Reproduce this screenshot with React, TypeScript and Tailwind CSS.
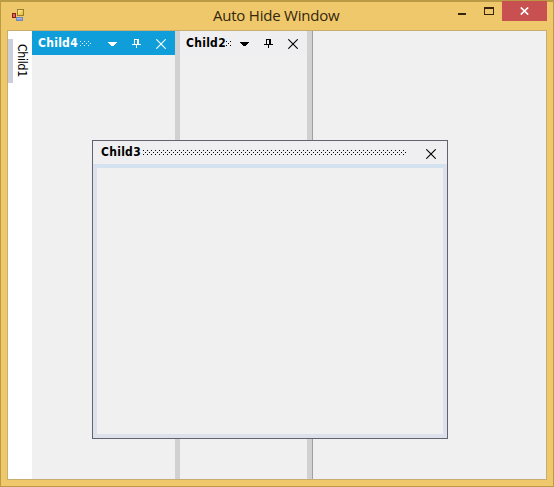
import React from 'react';

const CAPTION_FONT = "font-['DejaVu_Sans_Condensed','DejaVu_Sans',sans-serif]";

function Grip({ id, width }: { id: string; width: number }) {
  return (
    <svg width={width} height="5" className="block shrink-0" shapeRendering="crispEdges">
      <defs>
        <pattern id={id} width="4" height="4" patternUnits="userSpaceOnUse">
          <rect width="1" height="1" fill="currentColor" />
          <rect x="2" y="2" width="1" height="1" fill="currentColor" />
        </pattern>
      </defs>
      <rect width={width} height="5" fill={`url(#${id})`} />
    </svg>
  );
}

function Arrow() {
  return (
    <svg width="9" height="5" className="block" shapeRendering="crispEdges" fill="currentColor">
      <path d="M0 0h9v1h-1v1h-1v1h-1v1h-3v-1h-1v-1h-1v-1h-1z" />
    </svg>
  );
}

function Pin() {
  return (
    <svg width="9" height="9" className="block" shapeRendering="crispEdges" fill="currentColor">
      <path d="M2 0h5v5h2v1h-4v3h-1v-3h-4v-1h2zM3 1v4h2v-4z" fillRule="evenodd" />
    </svg>
  );
}

function Cross() {
  return (
    <svg width="10" height="10" className="block" fill="none" stroke="currentColor" strokeWidth="1.1">
      <path d="M.3 .3l9.4 9.4M9.7 .3L.3 9.7" />
    </svg>
  );
}

function Caption({ title, active = false }: { title: string; active?: boolean }) {
  return (
    <div className={`flex h-6 items-start ${active ? 'bg-[#109edb] text-white' : 'bg-[#efeff2] text-black'}`}>
      <span className={`shrink-0 pt-1 pl-1.5 text-[12px] leading-4 font-bold tracking-[0.28px] whitespace-nowrap ${active ? 'w-[48px]' : 'w-[46px]'} ${CAPTION_FONT}`}>{title}</span>
      <div className={`mt-[10px] shrink-0 ${active ? 'w-[28px]' : 'w-[14px]'}`}>
        <Grip id={`grip-${title}`} width={active ? 11 : 5} />
      </div>
      <div className="mt-[11px] w-[24px]"><Arrow /></div>
      <div className="mt-2 w-[24px]"><Pin /></div>
      <div className="mt-2"><Cross /></div>
    </div>
  );
}

export default function App() {
  return (
    <div className="h-[487px] w-[554px] border border-t-2 border-[#bb9a45] bg-[#f0c86c]">
      <header className="flex h-7 items-start pl-[10px] text-[#33260d]">
        <svg width="14" height="14" viewBox="0 0 14 14" className="mt-[6px] shrink-0">
          <defs>
            <linearGradient id="yellow-tile" x2="1" y2="1"><stop stopColor="#fff3a0" /><stop offset="1" stopColor="#e2b61f" /></linearGradient>
            <linearGradient id="blue-tile" x2="0" y2="1"><stop stopColor="#b8d2f5" /><stop offset="1" stopColor="#6686cc" /></linearGradient>
          </defs>
          <rect x="6.5" y="1.5" width="6" height="6" fill="url(#yellow-tile)" stroke="#987c35" />
          <rect x="1.5" y="5.5" width="3" height="4" fill="#d8695c" stroke="#8d201c" />
          <rect x="5.5" y="9.5" width="6" height="3" fill="url(#blue-tile)" stroke="#7689b8" />
        </svg>
        <h1 className="ml-[188px] w-[238px] pt-[3px] font-['Open_Sans','Noto_Sans',sans-serif] text-[15px] leading-5 font-normal tracking-[-0.22px] whitespace-nowrap">Auto Hide Window</h1>
        <div className="mt-[11px] ml-[7px] h-[2px] w-2 bg-[#38230c]" />
        <div className="mt-[5px] ml-[18px] h-2 w-[10px] border border-t-2 border-[#38230c]" />
        <div className="-mt-px ml-2 flex h-5 w-[45px] items-center justify-center bg-[#c85051]">
          <svg width="9" height="8" viewBox="0 0 9 8" stroke="white" strokeWidth="1.7"><path d="M.8 .5l7.4 7M8.2 .5l-7.4 7" /></svg>
        </div>
      </header>
      <main className="ml-[6px] grid h-[450px] w-[540px] grid-cols-[24px_143px_5px_127px_5px_1px_1fr] border border-[#c7ae70] bg-[#f0f0f0]">
        <aside className="flex bg-white pt-2">
          <div className="h-[44px] w-[5px] bg-[#cccedb]" />
          <span className={`ml-px h-[44px] w-4 pt-[5px] text-[12px] leading-4 tracking-[-0.2px] [writing-mode:vertical-rl] ${CAPTION_FONT}`}>Child1</span>
        </aside>
        <section><Caption title="Child4" active /></section>
        <div className="bg-[#d1d1d1]" />
        <section><Caption title="Child2" /></section>
        <div className="bg-[#d1d1d1]" />
        <div className="bg-[#a0a0a0]" />
        <section />
      </main>
      <section className="absolute top-[140px] left-[92px] flex h-[299px] w-[356px] flex-col border border-[#62636e] bg-[#efeff2]">
        <div className="flex h-[23px] shrink-0 items-start">
          <span className={`w-[50px] shrink-0 pt-[3px] pl-2 text-[12px] leading-4 font-bold tracking-[0.28px] whitespace-nowrap ${CAPTION_FONT}`}>Child3</span>
          <div className="mt-[9px] w-[283px]"><Grip id="grip-floating" width={263} /></div>
          <div className="mt-2"><Cross /></div>
        </div>
        <div className="flex-1 border-4 border-[#dce1ec] border-t-[#d4e1ef] bg-[#f0f0f0]" />
      </section>
    </div>
  );
}
